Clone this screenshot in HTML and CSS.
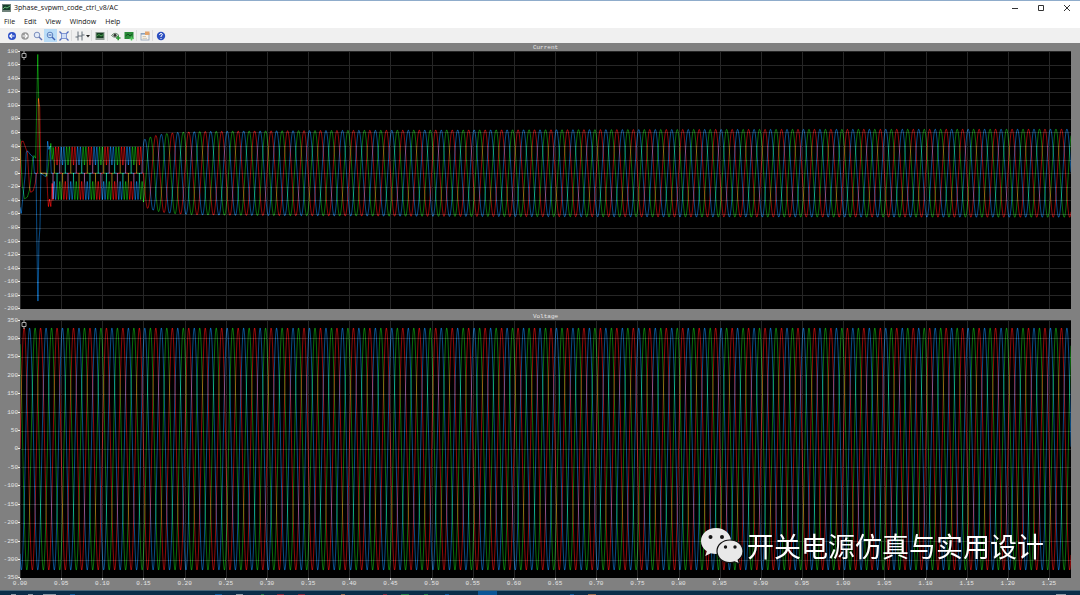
FILE: index.html
```html
<!DOCTYPE html>
<html lang="en">

<head>
    <meta charset="UTF-8">
    <meta name="viewport" content="width=device-width, initial-scale=1.0">
    <title>3phase_svpwm_code_ctrl_v8/AC</title>
    <link rel="stylesheet" href="styles.css">
</head>

<body>
    <header class="titlebar">
        <svg class="app-icon" viewBox="0 0 9 8">
            <rect width="9" height="8" fill="#71837b" />
            <rect x="1" y="1" width="7" height="5" fill="#173f2c" />
            <path d="M1 5L3 3L5 4L8 2" stroke="#64b878" fill="none" />
        </svg>
        <h1>3phase_svpwm_code_ctrl_v8/AC</h1>
        <div class="window-buttons">
            <button aria-label="Minimize"><svg viewBox="0 0 8 8"><path d="M1 4.5H7" /></svg></button>
            <button aria-label="Maximize"><svg viewBox="0 0 8 8"><path d="M1.5 1.5H6.5V6.5H1.5Z" /></svg></button>
            <button aria-label="Close"><svg viewBox="0 0 8 8"><path d="M1 1L7 7M7 1L1 7" /></svg></button>
        </div>
    </header>

    <nav class="menubar">
        <button>File</button>
        <button>Edit</button>
        <button>View</button>
        <button>Window</button>
        <button>Help</button>
    </nav>

    <div class="toolbar">
        <button aria-label="Back"><svg viewBox="0 0 10 10">
            <circle cx="5" cy="5" r="4" fill="#2d50c8" />
            <path d="M7.5 5H3M5 2.8L2.8 5L5 7.2" stroke="#fff" stroke-width="1.2" fill="none" />
        </svg></button>
        <button aria-label="Forward"><svg viewBox="0 0 10 10">
            <circle cx="5" cy="5" r="3.8" fill="#999" />
            <path d="M2.5 5H7M5 2.8L7.2 5L5 7.2" stroke="#fff" stroke-width="1.2" fill="none" />
        </svg></button>
        <button aria-label="Zoom"><svg viewBox="0 0 10 10">
            <circle cx="4" cy="4" r="2.8" fill="#e3ebf8" stroke="#7c8fbd" />
            <path d="M6 6L9 9" stroke="#6172b5" stroke-width="1.4" />
        </svg></button>
        <button class="active" aria-label="Zoom out"><svg viewBox="0 0 10 10">
            <circle cx="4" cy="4" r="2.8" fill="#d4e8fa" stroke="#5b80be" />
            <path d="M2.5 4H5.5" stroke="#3563b4" />
            <path d="M6 6L9 9" stroke="#3f60b5" stroke-width="1.4" />
        </svg></button>
        <button aria-label="Fit to view"><svg viewBox="0 0 10 10">
            <rect x="2.5" y="2.5" width="5" height="5" fill="#cfdcf5" stroke="#6d86cc" stroke-width=".8" />
            <path d="M.5 .5L2.5 2.5M9.5 .5L7.5 2.5M.5 9.5L2.5 7.5M9.5 9.5L7.5 7.5" stroke="#4d68bd" stroke-width="1.2" />
        </svg></button>
        <i></i>
        <button aria-label="Cursors"><svg viewBox="0 0 10 10">
            <path d="M3 .5V9.5M7 .5V9.5M.5 6H3M7 4H9.5M3 5H7" stroke="#56616c" stroke-width=".9" fill="none" />
        </svg></button>
        <button class="arrow" aria-label="Cursor options"><svg viewBox="0 0 4 10"><path d="M0 4H4L2 6.5Z" fill="#222" /></svg></button>
        <i></i>
        <button aria-label="Scope"><svg viewBox="0 0 10 10">
            <rect x=".5" y="1" width="9" height="8" fill="#8c9a90" />
            <rect x="1.5" y="2" width="7" height="5" fill="#173f22" />
            <path d="M1.5 5L4 3.5L6 5L8.5 3.5" stroke="#47a04e" fill="none" />
        </svg></button>
        <i></i>
        <button aria-label="Show traces"><svg viewBox="0 0 10 10">
            <path d="M.5 4.5Q4 0 8 4.5Q4 8 .5 4.5" fill="#dce8dc" stroke="#4e6a53" stroke-width=".8" />
            <circle cx="4" cy="4.3" r="1.5" fill="#333" />
            <path d="M5 7H9.5M7.2 4.8V9.3" stroke="#2d9a36" stroke-width="1.6" />
        </svg></button>
        <button aria-label="Add trace"><svg viewBox="0 0 10 10">
            <rect x=".5" y="1" width="9" height="7" fill="#288b38" />
            <path d="M1.5 5L4 3L6 5L8.5 3" stroke="#124d1d" fill="none" />
            <path d="M5.5 7.5H9.5M7.5 5.5V9.5" stroke="#51c45a" stroke-width="1.4" />
        </svg></button>
        <i></i>
        <button aria-label="Properties"><svg viewBox="0 0 10 10">
            <rect x="1" y="2.5" width="8" height="6.5" fill="#f7f4ee" stroke="#8d9fb5" stroke-width=".8" />
            <path d="M1 3H9" stroke="#708fb6" />
            <path d="M5 .5H9.5V4H5Z" fill="#e2a36a" />
            <path d="M2.5 5.5H6M2.5 7.3H7" stroke="#c6b697" stroke-width=".7" />
        </svg></button>
        <i></i>
        <button aria-label="Help"><svg viewBox="0 0 10 10">
            <circle cx="5" cy="5" r="4.2" fill="#2d50c0" />
            <path d="M3.5 4Q3.7 2.5 5 2.5Q6.5 2.6 6.4 3.8Q6.2 4.6 5 5V6M5 7V8" stroke="#fff" fill="none" />
        </svg></button>
    </div>

    <main class="scope">
        <h2>Current</h2>
        <ul class="y-axis" id="currentAxis"></ul>
        <div class="plot">
            <canvas id="current"></canvas>
            <svg class="marker" viewBox="0 0 6 9"><path d="M1 2.5H5V6.5H1ZM3 0V2.5M3 6.5V9" /></svg>
        </div>
        <h2>Voltage</h2>
        <ul class="y-axis" id="voltageAxis"></ul>
        <div class="plot">
            <canvas id="voltage"></canvas>
            <svg class="marker" viewBox="0 0 6 9"><path d="M1 2.5H5V6.5H1ZM3 0V2.5M3 6.5V9" /></svg>
        </div>
        <ul class="x-axis" id="timeAxis"></ul>
        <div class="watermark">
            <svg viewBox="0 0 42 36">
                <path d="M15 0C6.5 0 0 5.7 0 13C0 17.3 2.2 20.8 5.8 23.2L4.3 28L9.8 25.2Q12.5 26 15 26C23.5 26 30 20.3 30 13C30 5.7 23.5 0 15 0Z" fill="#e9e9e9" />
                <path d="M29 12C21.5 12 16 17 16 23.3C16 29.8 21.5 34.6 29 34.6Q31.5 34.6 33.7 33.8L38.5 36L37.2 32Q42 28.5 42 23.3C42 17 36.5 12 29 12Z" fill="#e9e9e9" stroke="#111" stroke-width="1.2" />
                <g fill="#151515">
                    <circle cx="9.5" cy="9" r="2" /><circle cx="21" cy="9" r="2" />
                    <circle cx="24.5" cy="19" r="1.7" /><circle cx="34" cy="19" r="1.7" />
                </g>
            </svg>
            <span lang="zh">开关电源仿真与实用设计</span>
        </div>
    </main>

    <footer class="taskbar">
        <svg viewBox="0 0 1080 5" preserveAspectRatio="none">
            <rect x="478" width="19" height="5" fill="#0b5596" />
            <path d="M11 4.5H16M28 4.5H33M43 4.5H56M236 4.5H243M1056 4.5H1066" stroke="#a9b4bd" />
            <path d="M70 4.5H75M215 4.5H222M445 4.5H449M570 4.5H574" stroke="#126ab5" />
            <path d="M277 4.5H284M298 4.5H305M383 4.5H387" stroke="#a32439" />
            <path d="M261 4.5H264M401 4.5H409M424 4.5H428" stroke="#27954b" />
            <path d="M341 4.5H345M588 4.5H596" stroke="#b77d54" />
        </svg>
    </footer>

    <script src="scope.js"></script>
</body>

</html>
```
FILE: styles.css
```css
* {
    box-sizing: border-box;
}

body {
    margin: 0;
    height: 100vh;
    display: flex;
    flex-direction: column;
    overflow: hidden;
    background: #fff;
    font-family: "Open Sans", "Noto Sans", sans-serif;
    font-size: 7px;
    color: #111;
}

button {
    margin: 0;
    padding: 0;
    border: 0;
    background: none;
    font: inherit;
    color: inherit;
}

svg {
    display: block;
}

h1,
h2,
ul {
    margin: 0;
    padding: 0;
    font-size: inherit;
    font-weight: normal;
    list-style: none;
}

.titlebar {
    height: 14px;
    flex-shrink: 0;
    display: flex;
    align-items: center;
    gap: 3px;
    padding-left: 2px;
    border-top: 1px solid #8faccb;
}

.app-icon {
    width: 9px;
    height: 8px;
}

.window-buttons {
    display: flex;
    margin-left: auto;
}

.window-buttons button {
    width: 26px;
    display: flex;
    justify-content: center;
}

.window-buttons svg {
    width: 8px;
    height: 8px;
    fill: none;
    stroke: #333;
    stroke-width: 1;
}

.menubar {
    height: 14px;
    flex-shrink: 0;
    display: flex;
    align-items: center;
    gap: 9px;
    padding-left: 4px;
}

.toolbar {
    height: 15px;
    flex-shrink: 0;
    display: flex;
    align-items: center;
    padding-left: 5px;
    background: #f0f0f0;
}

.toolbar button {
    width: 13px;
    height: 13px;
    display: flex;
    align-items: center;
    justify-content: center;
}

.toolbar svg {
    width: 10px;
    height: 10px;
}

.toolbar .active {
    background: #b9dcf7;
}

.toolbar .arrow,
.toolbar .arrow svg {
    width: 4px;
}

.toolbar i {
    width: 1px;
    height: 11px;
    margin: 0 1px;
    background: #dcdcdc;
}

.scope {
    position: relative;
    flex: 1;
    min-height: 0;
    display: grid;
    grid-template-columns: 20px 1fr 9px;
    grid-template-rows: 8px 1fr 11px 1fr 12px;
    background: #808080;
    color: #e6e6e6;
    font-family: "Liberation Mono", monospace;
    font-size: 6px;
}

.scope h2 {
    grid-column: 1 / -1;
    align-self: end;
    padding-left: 11px;
    line-height: 7px;
    text-align: center;
}

.y-axis {
    grid-column: 1;
    display: flex;
    flex-direction: column;
    justify-content: space-between;
}

.y-axis li {
    height: 0;
    display: flex;
    align-items: center;
    justify-content: flex-end;
}

.y-axis li::after {
    content: "";
    width: 2px;
    height: 1px;
    flex-shrink: 0;
    background: #eee;
}

.plot {
    grid-column: 2;
    position: relative;
    min-width: 0;
    min-height: 0;
    background: #000;
}

.plot canvas {
    position: absolute;
    width: 100%;
    height: 100%;
}

.marker {
    position: absolute;
    top: 0;
    left: 1px;
    width: 6px;
    height: 9px;
    fill: none;
    stroke: #aaa;
}

.x-axis {
    grid-column: 2;
    display: flex;
    justify-content: space-between;
    /* the trace runs a little past the last label */
    padding-right: 2.1%;
}

.x-axis li {
    width: 0;
    display: flex;
    flex-direction: column;
    align-items: center;
    line-height: 8px;
}

.x-axis li::before {
    content: "";
    width: 1px;
    height: 2px;
    background: #eee;
}

.watermark {
    position: absolute;
    right: 36px;
    bottom: 26px;
    display: flex;
    align-items: center;
    gap: 4px;
    color: #fff;
    font-family: "Noto Sans CJK SC", sans-serif;
    font-size: 27px;
    line-height: 36px;
}

.watermark svg {
    width: 42px;
    height: 36px;
}

.taskbar {
    height: 5px;
    flex-shrink: 0;
    background: #0a2d49;
    border-top: 1px solid #4b6678;
}

.taskbar svg {
    width: 100%;
    height: 4px;
}
```
FILE: scope.js
```js
const T_END = 1.2766;
const COLORS = { red: "#c80c0c", green: "#0c980e", blue: "#0a6abc" };
// peak of each phase inside one 20 ms cycle
const PHASE = { red: 0.25, blue: 0.583, green: 0.917 };

// start-up transient, [ms, ampere]
const STARTUP = {
    red: [[0, -20], [1, 40], [2, 47], [4, 47], [5.5, 42], [9, 30], [10.5, 0], [11.5, -20], [13, -28], [16, -26], [18.5, -15],
        [20, 0], [21.5, 0], [22.3, 111], [24, 97], [25.2, 0], [32.5, 0], [33.5, -30], [34.5, -50], [36, -38], [37.5, -50], [39, -15], [40, -40]],
    blue: [[0, -50], [1.5, -60], [4, -30], [6.5, 0], [7.5, 30], [9, 33], [13, 27], [16, 24], [17.5, 0], [19.5, 0], [20.3, -80],
        [21.6, -188], [22, -188], [23, -100], [24.3, -80], [25.3, 0], [31, -5], [32.5, 0], [33.5, 48], [35, 35], [36.5, 40], [38, 0], [40, 0]],
    green: [[0, 50], [1, 20], [3, -20], [5.5, -38], [9, -35], [11.5, -25], [14, 0], [15.5, 22], [17, 26], [19, 22], [20, 80],
        [21.6, 175], [23, 90], [24.3, 0], [31, 0], [32.5, -5], [33.5, 0], [36, 30], [37.5, 45], [39, 20], [40, 30]]
};

function cycle(name, t) {
    return Math.cos((t / 0.02 - PHASE[name]) * 2 * Math.PI);
}

function startup(name, ms) {
    const pts = STARTUP[name];
    for (let i = 1; i < pts.length; i++) {
        if (ms <= pts[i][0]) {
            const [x0, y0] = pts[i - 1];
            const [x1, y1] = pts[i];
            return y0 + (y1 - y0) * (ms - x0) / (x1 - x0);
        }
    }
    return 0;
}

// diode rectifier: two humps in each 120 degree conduction window
function rectifier(name, t) {
    const c = cycle(name, t);
    if (Math.abs(c) < 0.5) {
        return 0;
    }
    const angle = Math.acos(Math.min(1, Math.abs(c)));
    return Math.sign(c) * (12 + 27 * Math.pow(Math.sin(angle * 3), 2));
}

function current(name, t) {
    if (t < 0.04) {
        return startup(name, t * 1000);
    }
    if (t < 0.15) {
        return rectifier(name, t);
    }
    const s = t - 0.15;
    const amp = 65 - 4 * Math.exp(-s / 0.35) - 12 * Math.exp(-s / 0.02);
    return amp * cycle(name, t);
}

function voltage(name, t) {
    return 328 * cycle(name, t);
}

function draw(id, fn, max, min, step) {
    const canvas = document.getElementById(id);
    const w = canvas.clientWidth;
    const h = canvas.clientHeight;
    canvas.width = w;
    canvas.height = h;
    const ctx = canvas.getContext("2d");
    const toX = t => t / T_END * w;
    const toY = v => (max - v) / (max - min) * h;

    ctx.fillStyle = "#262626";
    for (let v = max; v >= min; v -= step) {
        ctx.fillRect(0, Math.round(toY(v)), w, 1);
    }
    for (let i = 0; i * 0.05 < T_END; i++) {
        ctx.fillRect(Math.round(toX(i * 0.05)), 0, 1, h);
    }

    // crossing traces add up to teal, yellow and purple
    ctx.globalCompositeOperation = "lighter";
    ctx.lineWidth = 0.7;
    ctx.lineJoin = "round";
    for (const name in COLORS) {
        ctx.strokeStyle = COLORS[name];
        ctx.beginPath();
        for (let t = 0; t <= T_END; t += 0.0002) {
            ctx.lineTo(toX(t), toY(fn(name, t)));
        }
        ctx.stroke();
    }
}

function addLabels(id, from, to, step, digits) {
    const list = document.getElementById(id);
    const count = Math.round((to - from) / step);
    for (let i = 0; i <= count; i++) {
        const li = document.createElement("li");
        li.textContent = (from + i * step).toFixed(digits);
        list.append(li);
    }
}

function drawAll() {
    draw("current", current, 180, -200, 20);
    draw("voltage", voltage, 350, -350, 50);
}

addLabels("currentAxis", 180, -200, -20, 0);
addLabels("voltageAxis", 350, -350, -50, 0);
addLabels("timeAxis", 0, 1.25, 0.05, 2);
drawAll();
window.addEventListener("resize", drawAll);
```
